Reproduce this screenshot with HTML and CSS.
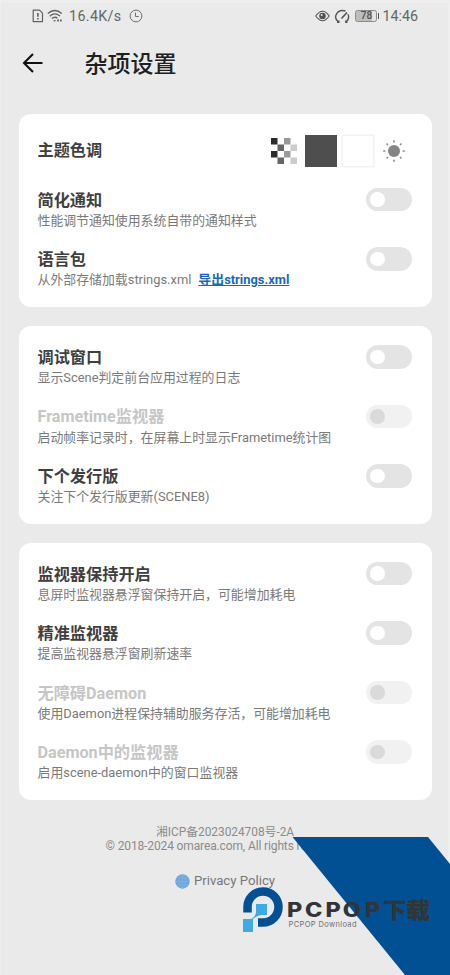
FILE: index.html
```html
<!DOCTYPE html>
<html lang="zh-CN">
<head>
<meta charset="utf-8">
<title>杂项设置</title>
<link rel="stylesheet" href="styles.css">
</head>
<body>
<div class="screen">
  <header class="status">
    <div class="status-side">
      <svg width="12" height="14" viewBox="0 0 12 14" fill="none" stroke="#606060" stroke-width="1.2"><path d="M1.2 1.2h6.3l3 3v8.4H1.2z" stroke-linejoin="round"/><path d="M5.9 4v3.8M5.9 9v1.6" stroke-width="1.6"/></svg>
      <svg class="wifi" width="16" height="14" viewBox="0 0 16 14" fill="none" stroke="#606060" stroke-width="1.3"><path d="M.8 4.5q7-6 14 0M2.7 7.2q5-4.400 10.300-.2M4.800 9.600q3-2.500 5.600-.3"/><path d="M6 11.300l1.600 1.500 1.400-1.500z" fill="#555" stroke="none"/><path d="M10.200 11.500h1.700M13 11.500h1.600" stroke-width="2"/></svg>
      <span class="speed">16.4K/s</span>
      <svg width="14" height="14" viewBox="0 0 14 14" fill="none" stroke="#707070" stroke-width="1"><circle cx="7" cy="7" r="5.900"/><path d="M6.500 3.600V7.500h3.300"/></svg>
    </div>
    <div class="status-side">
      <svg width="15" height="12" viewBox="0 0 15 12" fill="none" stroke="#555" stroke-width="1.100"><path d="M.8 6Q7.500-3.400 14.200 6 7.500 15.400.8 6z"/><circle cx="7.500" cy="6" r="2.700" fill="#555"/><circle cx="6.700" cy="5" r=".9" fill="#eaeaea" stroke="none"/></svg>
      <svg class="gauge" width="17" height="15" viewBox="0 0 17 15" fill="none" stroke="#555" stroke-width="1.400"><path d="M4.500 13Q.5 10 2 6 4.500.2 11.500 2M14 5.300q2 4.500-2 7.700M4.800 11.500v1.700H3M11.800 11.500v1.700h1.700"/><path d="M7.500 9.500L13 3.500" stroke-width="1.700"/></svg>
      <span class="battery">78</span>
      <span class="clock">14:46</span>
    </div>
  </header>

  <div class="topbar">
    <svg width="22" height="20" viewBox="0 0 22 20" fill="none" stroke="#111" stroke-width="2.100"><path d="M20.500 10H2M11 .9L2 10l9 9.100"/></svg>
    <h1>杂项设置</h1>
  </div>

  <main>
    <section class="card">
      <div class="theme">
        <h2>主题色调</h2>
        <div class="swatches">
          <svg width="26" height="26" viewBox="0 0 8 8"><path fill="#2c2c2c" d="M0 0h2v2H0zM0 4h2v2H0z"/><path fill="#666" d="M2 2h2v2H2zM2 6h2v2H2z"/><path fill="#999" d="M4 0h2v2H4zM4 4h2v2H4z"/><path fill="#ccc" d="M6 2h2v2H6zM6 6h2v2H6z"/></svg>
          <span class="swatch dark"></span>
          <span class="swatch white"></span>
          <svg class="sun" width="24" height="24" viewBox="-12 -12 24 24" stroke="#8c8c8c" stroke-width="1.700" stroke-linecap="round"><circle r="6" fill="#858585" stroke="none"/><path d="M0-9.300v-.8M0 9.300v.8M-9.300 0h-.8M9.300 0h.8M6.500-6.500l.4-.4M-6.500-6.500l-.4-.4M6.500 6.500l.4.4M-6.500 6.500l-.4.4"/></svg>
        </div>
      </div>
      <div class="row"><div><h2>简化通知</h2><p>性能调节通知使用系统自带的通知样式</p></div><span class="toggle"></span></div>
      <div class="row"><div><h2>语言包</h2><p>从外部存储加载strings.xml<a>导出strings.xml</a></p></div><span class="toggle"></span></div>
    </section>

    <section class="card">
      <div class="row"><div><h2>调试窗口</h2><p>显示Scene判定前台应用过程的日志</p></div><span class="toggle"></span></div>
      <div class="row disabled"><div><h2>Frametime监视器</h2><p>启动帧率记录时，在屏幕上时显示Frametime统计图</p></div><span class="toggle"></span></div>
      <div class="row"><div><h2>下个发行版</h2><p>关注下个发行版更新(SCENE8)</p></div><span class="toggle"></span></div>
    </section>

    <section class="card">
      <div class="row"><div><h2>监视器保持开启</h2><p>息屏时监视器悬浮窗保持开启，可能增加耗电</p></div><span class="toggle"></span></div>
      <div class="row"><div><h2>精准监视器</h2><p>提高监视器悬浮窗刷新速率</p></div><span class="toggle"></span></div>
      <div class="row disabled"><div><h2>无障碍Daemon</h2><p>使用Daemon进程保持辅助服务存活，可能增加耗电</p></div><span class="toggle"></span></div>
      <div class="row disabled"><div><h2>Daemon中的监视器</h2><p>启用scene-daemon中的窗口监视器</p></div><span class="toggle"></span></div>
    </section>
  </main>

  <footer>
    <div>湘ICP备2023024708号-2A</div>
    <div class="copyright">© 2018-2024 omarea.com, All rights reserved.</div>
    <div class="privacy">
      <svg width="15" height="15" viewBox="0 0 15 15" fill="none"><circle cx="7.500" cy="7.500" r="7.200" fill="#6da5dc"/><g stroke="#88b7e4" stroke-width=".6"><ellipse cx="7.500" cy="7.500" rx="3.300" ry="6.800"/><path d="M7.500.5v14M.5 7.500h14M1.500 4h12M1.500 11h12"/></g></svg>
      <span>Privacy Policy</span>
    </div>
  </footer>

  <svg class="watermark" width="210" height="138" viewBox="240 837 210 138">
    <path fill="#005093" d="M292.500 837H428l22 27v111h-45z"/>
    <path d="M247.500 912.500V907a15.500 15.500 0 1 1 15.500 15.500h-5" fill="none" stroke="#005093" stroke-width="8.500"/>
    <path fill="#3daae4" d="M256 904h11v11h-6q-4 .5-8 4v13h-10v-13h8q4-2 5-6z"/>
    <g font-family="Inter, 'Noto Sans CJK SC', sans-serif" fill="#333436">
      <text transform="translate(287 917) scale(1.2 1)" x="0 15 32 46.500 65" y="0" font-size="19.500" font-weight="800">PCPOP</text>
      <text x="383" y="918" font-size="22" font-weight="800" textLength="47" lengthAdjust="spacingAndGlyphs">下载</text>
      <text x="288.500" y="927" font-size="7.500" fill="#707070" textLength="68" lengthAdjust="spacing">PCPOP Download</text>
    </g>
  </svg>
</div>
</body>
</html>
```
FILE: styles.css
```css
* { box-sizing: border-box; margin: 0; padding: 0; }

body {
  background: #eaeaea;
  font-family: Roboto, "Noto Sans CJK SC", sans-serif;
  color: #3f3f3f;
}

svg { display: block; flex: none; }

.screen {
  position: relative;
  width: 450px;
  height: 975px;
  overflow: hidden;
  padding: 3px 2px 0 1px;
  box-shadow: inset 0 3px #eee, inset 1px 0 #efefef, inset -2px 0 #efefef;
}

.status {
  display: flex;
  justify-content: space-between;
  height: 26px;
  padding: 0 30px 0 31px;
  color: #666;
  font-size: 14.3px;
}

.status-side { display: flex; align-items: center; }
.wifi { margin-left: 3px; }
.speed { margin: 0 7px 0 6px; letter-spacing: 0.35px; }
.gauge { margin: 0 4px; }
.clock { margin-left: 5px; }

.battery {
  position: relative;
  width: 22px;
  height: 12px;
  border: 1px solid #8c8c8c;
  border-radius: 2.500px;
  background: linear-gradient(90deg, #bdbdbd 78%, #e4e4e4 78%);
  color: #505050;
  font-size: 10px;
  font-weight: 500;
  line-height: 10px;
  text-align: center;
}

.battery::after {
  content: "";
  position: absolute;
  right: -3px;
  top: 2px;
  width: 1.500px;
  height: 6px;
  background: #555;
}

.topbar {
  display: flex;
  align-items: center;
  gap: 40.500px;
  height: 68px;
  padding-left: 21px;
}

h1 {
  padding-top: 3px;
  font-size: 23px;
  line-height: 30px;
  font-weight: 500;
  color: #202020;
}

main {
  display: flex;
  flex-direction: column;
  gap: 18.800px;
  padding: 17px 16.500px 0 17.500px;
}

.card {
  display: flex;
  flex-direction: column;
  gap: 17.500px;
  padding: 19px 19px 18px;
  background: #fff;
  border-radius: 12px;
}

.row, .theme { display: flex; justify-content: space-between; }
.theme { height: 37px; }
.theme h2 { line-height: 34px; }

h2 {
  padding-top: 1px;
  margin-bottom: -1px;
  font-size: 16.200px;
  line-height: 24px;
  font-weight: 700;
  white-space: nowrap;
}

.row p {
  padding-top: 0.400px;
  margin-bottom: -0.400px;
  font-size: 12.900px;
  line-height: 18px;
  color: #7a7a7a;
  white-space: nowrap;
}

.row a {
  margin-left: 7px;
  color: #1769be;
  font-weight: 700;
  text-decoration: underline;
}

.toggle {
  flex: none;
  width: 46.500px;
  height: 23.500px;
  padding: 4.500px;
  margin: 0.300px 0.300px 0 0;
  border-radius: 12px;
  background: #e4e4e4;
}

.toggle::before {
  content: "";
  display: block;
  width: 14.500px;
  height: 14.500px;
  border-radius: 50%;
  background: #fff;
}

.disabled h2 { color: #c6c6c6; }
.disabled .toggle { background: #f1f1f1; }
.disabled .toggle::before { background: #dadada; }

.swatches {
  display: flex;
  align-items: center;
  height: 36px;
  padding-right: 6.500px;
}

.swatch { width: 32px; height: 32px; margin-left: 8px; }
.dark { background: #4e4e4e; }
.white { margin-left: 5px; border: 1px solid #f3f3f3; box-shadow: 0 0 2px #e8e8e8; }
.sun { margin-left: 8px; }

footer {
  padding: 25px 0 0 1px;
  color: #8a8a8a;
  font-size: 11.850px;
  line-height: 14px;
  text-align: center;
}

.copyright { font-size: 12px; letter-spacing: -0.130px; }

footer .privacy {
  display: flex;
  align-items: center;
  justify-content: center;
  gap: 4px;
  height: 18px;
  margin-top: 19px;
  color: #777;
  font-size: 13.200px;
}

.watermark { position: absolute; right: 0; bottom: 0; }
```
